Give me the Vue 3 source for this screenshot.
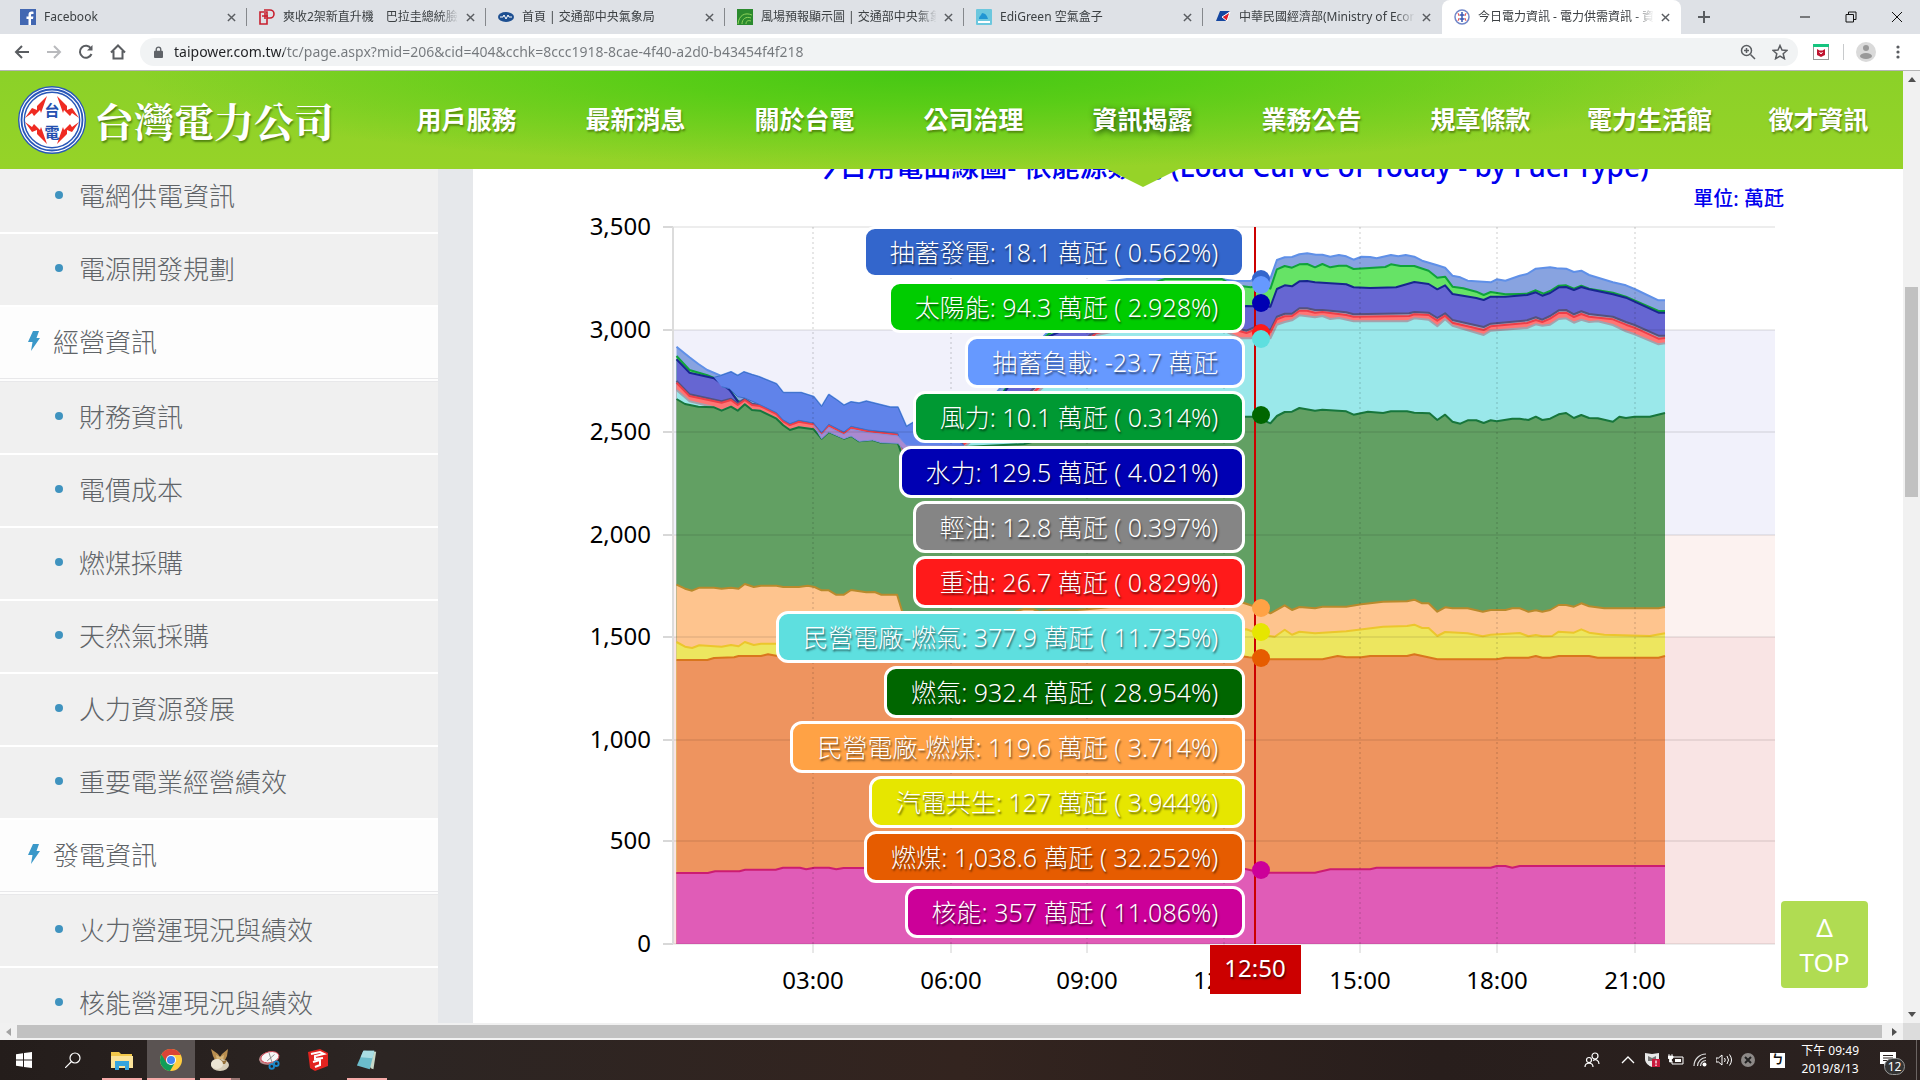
<template>
  <div class="screen">
    <!-- 瀏覽器分頁 -->
    <div class="tab-strip">
      <div v-for="tab in tabs" :key="tab.title" class="tab" :class="{ active: tab.active }">
        <svg class="favicon" viewBox="0 0 16 16" aria-hidden="true">
          <template v-if="tab.icon === 'facebook'">
            <rect width="16" height="16" fill="#4267b2" />
            <path d="M11 16V10h2l.4-2.4H11V6.2c0-.8.3-1.2 1.300-1.200h1.200V2.800C13 2.700 12.300 2.600 11.600 2.600 9.700 2.600 8.500 3.700 8.500 5.800v1.800H6.500V10h2v6z" fill="#fff" />
          </template>
          <template v-else-if="tab.icon === 'news'">
            <path d="M1 3h7v12H1z M5 1h6a4 4 0 0 1 0 8H8 M3 7h6 M6 4v6" fill="none" stroke="#c8202f" stroke-width="1.6" />
          </template>
          <template v-else-if="tab.icon === 'cwb'">
            <ellipse cx="8" cy="8" rx="8" ry="5" fill="#1d4f91" />
            <path d="M2 8h3l1-2 2 4 2-4 1 2h3" fill="none" stroke="#fff" />
          </template>
          <template v-else-if="tab.icon === 'wind'">
            <rect width="16" height="16" fill="#2b8a2e" />
            <path d="M1 15C2 6 8 3 15 6M5 15c0-5 4-8 9-6M9 15c0-3 2-4 5-3" fill="none" stroke="#8ed35a" />
          </template>
          <template v-else-if="tab.icon === 'air'">
            <rect width="16" height="16" rx="1" fill="#6cc7de" />
            <path d="M3 10c0-3 2-3 3-6 3 0 5 2 6 6z" fill="#2196d3" />
            <path d="M2 13h12" stroke="#fff" stroke-width="2" />
          </template>
          <template v-else-if="tab.icon === 'moea'">
            <path d="M5 2h10L9 7l3 5H1z" fill="#1546a0" />
            <path d="M7 8l8-5-3 9z" fill="#e0202c" stroke="#fff" />
          </template>
          <template v-else>
            <circle cx="8" cy="8" r="7" fill="#fff" stroke="#7186c8" stroke-width="1.5" />
            <path d="M8 3v10M5.500 6h5M5.500 10h5" stroke="#3a58b4" stroke-width="1.5" />
            <path d="M4 4l1 3M12 4l-1 3M4 12l1-3M12 12l-1-3" stroke="#e55" />
          </template>
        </svg>
        <span class="tab-title">{{ tab.title }}</span>
        <button class="icon-btn tab-close" aria-label="關閉分頁">
          <svg viewBox="0 0 10 10"><path d="M1 1l8 8M9 1l-8 8" /></svg>
        </button>
      </div>
      <button class="icon-btn new-tab" aria-label="新增分頁">
        <svg viewBox="0 0 12 12"><path d="M6 0v12M0 6h12" /></svg>
      </button>
      <div class="win-controls">
        <button class="icon-btn" aria-label="最小化"><svg viewBox="0 0 12 12"><path d="M1 6h10" /></svg></button>
        <button class="icon-btn" aria-label="還原"><svg viewBox="0 0 12 12"><path d="M1 3.500h7.500V11H1zM3.500 3V1H11v7.500H9" /></svg></button>
        <button class="icon-btn" aria-label="關閉"><svg viewBox="0 0 12 12"><path d="M1 1l10 10M11 1L1 11" /></svg></button>
      </div>
    </div>

    <!-- 網址列 -->
    <div class="toolbar">
      <button class="icon-btn" aria-label="上一頁">
        <svg viewBox="0 0 16 16"><path d="M15 8H2M8 2L2 8l6 6" /></svg>
      </button>
      <button class="icon-btn dim" aria-label="下一頁">
        <svg viewBox="0 0 16 16"><path d="M1 8h13M8 2l6 6-6 6" /></svg>
      </button>
      <button class="icon-btn" aria-label="重新載入">
        <svg viewBox="0 0 16 16"><path d="M13.500 10A6 6 0 1 1 13 4.500" /><path d="M14.500 1v5.500H9z" class="solid" /></svg>
      </button>
      <button class="icon-btn" aria-label="首頁">
        <svg viewBox="0 0 16 16"><path d="M1 8.500L8 1.500l7 7M3.500 7v7.500h9V7" /></svg>
      </button>
      <div class="omnibox">
        <svg class="lock" viewBox="0 0 10 14"><rect y="5" width="10" height="8" rx="1" fill="#5f6368" /><path d="M2.500 6V3.500a2.500 2.500 0 0 1 5 0V6" fill="none" stroke="#5f6368" stroke-width="1.5" /></svg>
        <input class="url" type="text" aria-label="網址" :value="url" />
        <button class="icon-btn thin" aria-label="縮放">
          <svg viewBox="0 0 16 16"><circle cx="6.5" cy="6.5" r="5" /><path d="M10.500 10.500L15 15M4 6.500h5M6.500 4v5" /></svg>
        </button>
        <button class="icon-btn thin" aria-label="加入書籤">
          <svg viewBox="0 0 16 16"><path d="M8 1.500l2 4.500 5 .5-3.800 3.300 1.200 4.900L8 12.100l-4.400 2.600 1.200-4.900L1 6.500 6 6z" /></svg>
        </button>
      </div>
      <button class="icon-btn ext" aria-label="擴充功能">
        <svg viewBox="0 0 16 16"><rect x=".5" y=".5" width="15" height="15" fill="#fff" stroke="#999" /><path d="M0 0h16v3H0z" fill="#16c47f" stroke="none" /><path d="M4 5l2.500 1.500h3L12 5v6l-4 2-4-2z" fill="#c01530" stroke="none" /><path d="M6.500 8L8 10l1.500-2" stroke="#fff" stroke-width="1" /></svg>
      </button>
      <span class="bar-sep"></span>
      <button class="icon-btn avatar" aria-label="使用者">
        <svg viewBox="0 0 20 20"><circle cx="10" cy="10" r="10" fill="#dadada" /><circle cx="10" cy="6" r="3" fill="#999" /><ellipse cx="10" cy="14" rx="6" ry="3" fill="#999" /></svg>
      </button>
      <button class="icon-btn dots" aria-label="選單">
        <svg viewBox="0 0 4 16"><circle cx="2" cy="3" r="1.6" /><circle cx="2" cy="8" r="1.6" /><circle cx="2" cy="13" r="1.6" /></svg>
      </button>
    </div>

    <div class="viewport">
      <div class="page">
        <header class="site-header">
          <a class="brand" href="#">
            <svg class="logo" viewBox="0 0 70 70" aria-hidden="true">
              <circle cx="35" cy="35" r="34" fill="#2857b8" />
              <circle cx="35" cy="35" r="32" fill="none" stroke="#fff" stroke-width="1.2" />
              <circle cx="35" cy="35" r="29" fill="none" stroke="#fff" stroke-width="1.2" />
              <circle cx="35" cy="35" r="27" fill="#fff" />
              <g fill="#ef2b22">
                <path d="M30 11L20 21l0 4-5-2-7 10 7-5 2 3 6-6 1 3z" />
                <path d="M40 11l10 10 0 4 5-2 7 10-7-5-2 3-6-6-1 3z" />
                <path d="M30 59L20 49l0-4-5 2-7-10 7 5 2-3 6 6 1-3z" />
                <path d="M40 59l10-10 0-4 5 2 7-10-7 5-2-3-6 6-1-3z" />
              </g>
              <text x="35" y="31" text-anchor="middle">台</text>
              <text x="35" y="53" text-anchor="middle">電</text>
            </svg>
            <span class="brand-name">台灣電力公司</span>
          </a>
          <nav class="main-nav">
            <a v-for="item in menu" :key="item" href="#" :class="{ current: item === '資訊揭露' }">{{ item }}</a>
          </nav>
        </header>

        <div class="page-body">
          <aside class="sidebar">
            <a
              v-for="item in sideMenu"
              :key="item.text"
              href="#"
              class="side-item"
              :class="{ heading: item.heading }"
            >
              <svg v-if="item.heading" class="bolt" viewBox="0 0 12 20"><path d="M5 0h6L8.500 7H12L3 20l1.500-9H0z" fill="#3a98c9" /></svg>
              <i v-else class="bullet"></i>
              <span>{{ item.text }}</span>
            </a>
          </aside>

          <main class="content">
            <svg class="chart" viewBox="473 169 1430 854" role="img" aria-label="今日用電曲線圖">
              <text class="chart-title" x="1230" y="177" text-anchor="middle">今日用電曲線圖- 依能源類別 (Load Curve of Today - by Fuel Type)</text>
              <text class="unit" x="1784" y="206" text-anchor="end">單位: 萬瓩</text>

              <rect x="674" y="330" width="1101" height="205" fill="#f1f1fb" />
              <rect x="674" y="535" width="1101" height="102" fill="#fcf2f0" />
              <rect x="674" y="637" width="1101" height="307" fill="#f9e4e4" />

              <!-- 由上往下疊 -->
              <template v-for="s in series" :key="s.name">
                <polygon :points="s.area" :fill="s.fill" />
                <polyline :points="s.line" fill="none" :stroke="s.stroke" stroke-width="2" stroke-linejoin="round" />
              </template>
              <polygon :points="pumpOverlay" fill="#6083ea" />
              <polyline :points="pumpOverlay" fill="none" stroke="#3c70c8" stroke-width="1" />
              <polygon :points="mixedOverlay" fill="#a98ad0" stroke="#7f8fe0" stroke-width="1" />

              <g v-for="t in yTicks" :key="t.label">
                <line x1="663" x2="673" :y1="t.y" :y2="t.y" stroke="#d8d8d8" stroke-width="2" />
                <line x1="673" x2="1775" :y1="t.y" :y2="t.y" stroke="#000" stroke-opacity=".07" stroke-width="2" />
                <text class="axis" x="651" :y="t.y + 8" text-anchor="end">{{ t.label }}</text>
              </g>
              <g v-for="t in xTicks" :key="t.label">
                <line :x1="t.x" :x2="t.x" y1="227" y2="944" stroke="#000" stroke-opacity=".2" stroke-dasharray="2 3" />
                <line :x1="t.x" :x2="t.x" y1="944" y2="953" stroke="#d0d0d0" />
                <text class="axis" :x="t.x" y="989" text-anchor="middle">{{ t.label }}</text>
              </g>
              <line x1="673" x2="673" y1="227" y2="944" stroke="#dcdcdc" stroke-width="2" />

              <line x1="1255" x2="1255" y1="227" y2="944" stroke="#cc0000" stroke-width="2" />
              <circle v-for="d in dots" :key="d.y" cx="1261" :cy="d.y" r="9" :fill="d.color" />

              <rect x="1210" y="945" width="91" height="49" fill="#cc0000" />
              <text class="cursor-time" x="1255" y="977" text-anchor="middle">12:50</text>
            </svg>

            <div class="balloons">
              <div v-for="b in balloons" :key="b.text" class="balloon" :style="{ backgroundColor: b.color }">{{ b.text }}</div>
            </div>

            <button class="to-top"><span>Δ</span><span>TOP</span></button>
          </main>
        </div>
      </div>

      <div class="v-scroll">
        <svg class="arrow" viewBox="0 0 8 5"><path d="M0 5l4-5 4 5z" fill="#505050" /></svg>
        <div class="v-track"><div class="v-thumb"></div></div>
        <svg class="arrow" viewBox="0 0 8 5"><path d="M0 0l4 5 4-5z" fill="#505050" /></svg>
      </div>
    </div>

    <div class="h-scroll">
      <svg class="arrow-side" viewBox="0 0 5 8"><path d="M5 0L0 4l5 4z" fill="#a3a3a3" /></svg>
      <div class="h-thumb"></div>
      <svg class="arrow-side" viewBox="0 0 5 8"><path d="M0 0l5 4-5 4z" fill="#505050" /></svg>
      <div class="corner"></div>
    </div>

    <!-- 工作列 -->
    <footer class="taskbar">
      <button class="task" aria-label="開始">
        <svg viewBox="0 0 16 16"><path d="M0 2.200L7 1.200V7.500H0zM8 1l8-1v7.500H8zM0 8.500h7v6.300L0 13.800zM8 8.500h8V16l-8-1z" fill="#fff" /></svg>
      </button>
      <button class="task" aria-label="搜尋">
        <svg viewBox="0 0 16 16"><circle cx="10" cy="6" r="5" fill="none" stroke="#fff" stroke-width="1.2" /><path d="M6.500 9.500L0 16" stroke="#fff" stroke-width="1.2" /></svg>
      </button>
      <button class="task big open" aria-label="檔案總管">
        <svg viewBox="0 0 22 22"><path d="M0 3h8l2 2h11v14H0z" fill="#f2c84b" /><path d="M0 7h22v12H0z" fill="#fce49a" /><path d="M4 12h14v9h-4v-4H8v4H4z" fill="#35a4dd" /></svg>
      </button>
      <button class="task big open focused" aria-label="Chrome">
        <svg viewBox="0 0 22 22"><circle cx="11" cy="11" r="11" fill="#ffcd40" /><path d="M11 6h9.800A11 11 0 0 0 1.500 5.500L6 14z" fill="#db4437" /><path d="M1.500 5.500A11 11 0 0 0 10 22l5-8.500L6.500 13.500z" fill="#0f9d58" /><circle cx="11" cy="11" r="5" fill="#fff" /><circle cx="11" cy="11" r="4" fill="#4285f4" /></svg>
      </button>
      <button class="task big open grouped" aria-label="蛋殼程式">
        <svg viewBox="0 0 22 22"><path d="M2 0l7 5 2 3 2-3 6-5-1 7-3 6H7L4 7z" fill="#b98e50" /><path d="M7 6l4 2 4-2-1 6H8z" fill="#d7b67a" /><ellipse cx="11" cy="16" rx="9" ry="6" fill="#d6cdb8" /><path d="M6 10l3 2 2-2 3 2 4-1-2 4H6z" fill="#96713a" /><ellipse cx="8" cy="15" rx="6" ry="5" fill="#ece5d3" /></svg>
      </button>
      <button class="task big" aria-label="剪取工具">
        <svg viewBox="0 0 24 22"><ellipse cx="12" cy="9" rx="11" ry="7" fill="#b9888a" transform="rotate(-12 12 9)" /><ellipse cx="13" cy="8" rx="10" ry="6" fill="#f7f7f7" stroke="#cf4352" transform="rotate(-12 13 8)" /><path d="M12 3l4 13M18 5l-8 7" stroke="#888" /><circle cx="15" cy="18" r="2.5" fill="none" stroke="#1b87c9" stroke-width="2" /><circle cx="20" cy="15" r="2.5" fill="none" stroke="#1b87c9" stroke-width="2" /></svg>
      </button>
      <button class="task big" aria-label="SketchUp">
        <svg viewBox="0 0 22 22"><path d="M1 3l12-3 8 4v13L8 22l-5-3z" fill="#e2231f" /><path d="M4 5l9-2 4 2-9 2 0 3 8-1M6 13l7-2v5l-5 2" fill="none" stroke="#fff" stroke-width="2" /></svg>
      </button>
      <button class="task big open" aria-label="記事本">
        <svg viewBox="0 0 24 22"><path d="M9 1l13 1-3 19-3-1z" fill="#c7d8c8" /><path d="M8 1h12l-5 20L1 17z" fill="#6bbccb" /><path d="M8 1h12l-2 8L5 8z" fill="#a9dde3" /></svg>
      </button>

      <div class="tray">
        <svg class="t16" viewBox="0 0 16 16"><g fill="none" stroke="#fff" stroke-width="1.2"><circle cx="11" cy="4" r="3" /><circle cx="5" cy="8" r="2.5" /><path d="M1 15c0-5 8-5 8 0M9 8.500c3-2 6 0 6 3.500" /></g></svg>
        <svg class="t16" viewBox="0 0 16 16"><path d="M2 11l6-6 6 6" fill="none" stroke="#fff" stroke-width="1.3" /></svg>
        <svg class="t16" viewBox="0 0 16 16"><path d="M1 1l7 1 7-1v6c0 4-4 7-7 8-3-1-7-4-7-8z" fill="#e8e8e8" /><path d="M4 4l4 2 4-2v5H4z" fill="#777" /><rect x="8" y="7" width="8" height="8" fill="#c8193c" /><path d="M12 8.500v3M12 12.500v1.500" stroke="#fff" stroke-width="1.3" /></svg>
        <svg class="t16" viewBox="0 0 16 16"><path d="M5 5h10v7H4V9" fill="none" stroke="#fff" /><path d="M7 7h6v3H7z" fill="#fff" /><path d="M1 2v2M4 2v2M0 4h5v2L3.500 7.500V10h-2V7.500L0 6z" fill="#fff" stroke="#fff" stroke-width=".8" /></svg>
        <svg class="t16" viewBox="0 0 16 16"><g fill="none" stroke="#ddd" stroke-width="1.2"><path d="M2 14A12 12 0 0 1 14 2" /><path d="M5.500 14A9 9 0 0 1 14 5.500" /><path d="M8.500 14A6 6 0 0 1 14 8.500" /></g><circle cx="12.5" cy="12.5" r="2" fill="#fff" /></svg>
        <svg class="t16" viewBox="0 0 16 16"><g fill="none" stroke="#fff"><path d="M0 6h2.500L6 3v10L2.500 10H0zM8.500 6q1.500 2 0 4M11 4q3 4 0 8M13.500 2.500q4 5.500 0 11" /></g></svg>
        <svg class="t16" viewBox="0 0 16 16"><circle cx="8" cy="8" r="7" fill="#8d8987" /><path d="M5 5l6 6M11 5l-6 6" stroke="#222" stroke-width="2" /></svg>
        <span class="ime">ㄅ</span>
        <div class="clock"><span>下午 09:49</span><span>2019/8/13</span></div>
        <div class="notify">
          <svg viewBox="0 0 16 16"><path d="M0 0h16v12H7l-3 3v-3H0z" fill="#fff" /><path d="M3 3.500h10M3 6h10M3 8.500h7" stroke="#2a211f" /></svg>
          <span class="badge">12</span>
        </div>
      </div>
    </footer>
  </div>
</template>

<script setup>
const url = 'taipower.com.tw/tc/page.aspx?mid=206&cid=404&cchk=8ccc1918-8cae-4f40-a2d0-b43454f4f218'

const tabs = [
  { title: 'Facebook', icon: 'facebook' },
  { title: '爽收2架新直升機　巴拉圭總統臉書', icon: 'news' },
  { title: '首頁 | 交通部中央氣象局', icon: 'cwb' },
  { title: '風場預報顯示圖 | 交通部中央氣象局', icon: 'wind' },
  { title: 'EdiGreen 空氣盒子', icon: 'air' },
  { title: '中華民國經濟部(Ministry of Economic', icon: 'moea' },
  { title: '今日電力資訊 - 電力供需資訊 - 資訊', icon: 'taipower', active: true }
]

const menu = ['用戶服務', '最新消息', '關於台電', '公司治理', '資訊揭露', '業務公告', '規章條款', '電力生活館', '徵才資訊']

const sideMenu = [
  { text: '電網供電資訊' },
  { text: '電源開發規劃' },
  { text: '經營資訊', heading: true },
  { text: '財務資訊' },
  { text: '電價成本' },
  { text: '燃煤採購' },
  { text: '天然氣採購' },
  { text: '人力資源發展' },
  { text: '重要電業經營績效' },
  { text: '發電資訊', heading: true },
  { text: '火力營運現況與績效' },
  { text: '核能營運現況與績效' }
]

const balloons = [
  { text: '抽蓄發電: 18.1 萬瓩 ( 0.562%)', color: '#3366cc' },
  { text: '太陽能: 94.3 萬瓩 ( 2.928%)', color: '#00cc00' },
  { text: '抽蓄負載: -23.7 萬瓩', color: '#6699ff' },
  { text: '風力: 10.1 萬瓩 ( 0.314%)', color: '#009933' },
  { text: '水力: 129.5 萬瓩 ( 4.021%)', color: '#0000b3' },
  { text: '輕油: 12.8 萬瓩 ( 0.397%)', color: '#858585' },
  { text: '重油: 26.7 萬瓩 ( 0.829%)', color: '#ff1a1a' },
  { text: '民營電廠-燃氣: 377.9 萬瓩 ( 11.735%)', color: '#5edfdf' },
  { text: '燃氣: 932.4 萬瓩 ( 28.954%)', color: '#006600' },
  { text: '民營電廠-燃煤: 119.6 萬瓩 ( 3.714%)', color: '#ffa245' },
  { text: '汽電共生: 127 萬瓩 ( 3.944%)', color: '#e6e600' },
  { text: '燃煤: 1,038.6 萬瓩 ( 32.252%)', color: '#e65c00' },
  { text: '核能: 357 萬瓩 ( 11.086%)', color: '#cc0099' }
]

const yTicks = [
  { label: '3,500', y: 227 },
  { label: '3,000', y: 330 },
  { label: '2,500', y: 432 },
  { label: '2,000', y: 535 },
  { label: '1,500', y: 637 },
  { label: '1,000', y: 740 },
  { label: '500', y: 841 },
  { label: '0', y: 944 }
]

const xTicks = [
  { label: '03:00', x: 813 },
  { label: '06:00', x: 951 },
  { label: '09:00', x: 1087 },
  { label: '12:00', x: 1224 },
  { label: '15:00', x: 1360 },
  { label: '18:00', x: 1497 },
  { label: '21:00', x: 1635 }
]

const dots = [
  { y: 279, color: '#3366cc' },
  { y: 285, color: '#6699ff' },
  { y: 303, color: '#0000b3' },
  { y: 333, color: '#ff1a1a' },
  { y: 339, color: '#5edfdf' },
  { y: 415, color: '#006600' },
  { y: 608, color: '#ffa245' },
  { y: 632, color: '#e6e600' },
  { y: 658, color: '#e65c00' },
  { y: 870, color: '#cc0099' }
]

// 每段資料各有自己的原點與比例
const scale = (str, ox, sx, oy) =>
  str.trim().split(/\s+/).map(p => {
    const [x, y] = p.split(',').map(Number)
    return [Math.round((ox + x / sx) * 10) / 10, Math.round((oy + y / 3) * 10) / 10]
  })
const morning = str => scale(str, 560, 2.24, 160)
const base = str => scale(str, 560, 2.24, 440)
const low = str => scale(str, 560, 2.063, 720)
const after = str => scale(str, 1240, 2.306, 200)
const afterLow = str => scale(str, 1240, 2.306, 520)
const join = pts => pts.map(p => p.join(',')).join(' ')

const make = (name, fill, stroke, pts) => ({
  name,
  fill,
  stroke,
  line: join(pts),
  area: join([...pts, [pts[pts.length - 1][0], 944], [pts[0][0], 944]])
})

const topMorning = '261,560 290,592 310,612 330,630 360,647 383,636 398,647 412,636 430,644 445,650 485,672 500,698 540,698 568,710 586,740 602,704 620,720 636,736 652,726 670,730 686,724 740,742 757,742 776,800 793,786'
const redMorning = '261,668 290,708 362,728 383,720 398,735 414,720 430,735 448,738 485,762 500,784 515,795 535,785 568,793 586,822 602,797 636,820 652,803 690,814 757,824 765,870'
const gasMorning = '261,717 280,732 310,740 345,742 362,752 383,740 398,752 414,733 430,750 448,752 485,776 500,796 515,810 535,802 568,808 586,836 602,816 636,836 652,828 670,844 700,840 720,848 757,850 765,880'

const series = [
  make('抽蓄', '#88a3e0', '#5f90e8', [
    ...morning(topMorning),
    [940, 425], [970, 420], [997, 392], [1045, 335], [1080, 300], [1105, 282], [1127, 279], [1220, 279], [1235, 281],
    ...after('25,243 45,222 70,235 85,180 103,172 120,171 137,163 155,160 175,164 190,164 208,170 228,165 245,169 262,179 280,170 300,171 315,175 348,165 365,169 382,165 402,170 420,182 455,196 473,203 490,227 508,232 525,242 578,247 592,238 612,242 645,227 662,222 682,206 715,202 730,205 752,206 770,216 787,212 805,225 860,247 890,256 910,267 965,301 980,301')
  ]),
  make('太陽能', '#66e366', '#0fa33a', [
    ...morning('261,588 290,630 330,646 345,654 380,690 398,722 430,742 485,770 568,800 757,830 776,860'),
    [960, 440], [997, 400], [1045, 337], [1110, 286], [1150, 284], [1165, 279], [1222, 279], [1232, 285],
    ...after('25,262 50,255 70,266 85,208 103,198 120,203 137,193 155,192 173,202 190,192 208,202 228,197 245,197 262,207 335,201 348,193 370,198 402,198 435,212 455,233 473,230 490,260 515,265 545,275 562,285 578,276 612,283 645,282 662,281 682,271 700,281 715,273 735,257 752,256 770,266 787,257 805,266 860,278 890,290 965,333 980,333')
  ]),
  make('水力', '#6666d2', '#17268f', [
    ...morning('261,598 290,638 330,650 345,655 380,690 398,724 430,742 485,770 568,800 757,830 776,860'),
    [960, 440], [997, 402], [1045, 338], [1110, 310], [1230, 308],
    ...after('15,318 70,320 85,267 103,256 120,259 137,244 155,243 173,247 208,250 245,253 262,262 300,264 360,262 402,246 435,252 455,268 473,256 490,282 545,294 562,300 578,290 612,290 662,285 682,277 697,287 715,279 735,262 752,261 770,270 787,261 805,268 860,283 890,293 965,338 980,338')
  ]),
  make('輕油', '#a9a3b8', '#55527e', [
    ...morning('261,663 290,703 362,724 383,716 398,730 414,716 430,731 448,734 485,758 500,780 515,791 535,781 568,789 586,818 602,793 636,816 652,799 690,810 757,820 765,866'),
    [960, 446], [1030, 392], [1090, 335], [1130, 322], [1225, 325],
    ...after('15,392 40,378 70,390 85,350 103,341 120,341 137,325 155,325 173,330 190,330 245,337 262,343 390,340 402,336 435,338 455,354 473,340 490,360 562,381 578,371 662,361 682,352 697,359 715,348 735,331 752,330 770,343 787,334 805,342 860,350 890,366 910,375 965,407 980,407')
  ]),
  make('重油', '#ff7575', '#ee3e48', [
    ...morning(redMorning),
    [960, 447], [1034, 392], [1094, 335], [1130, 324], [1225, 327],
    ...after('15,399 40,386 70,397 85,358 103,349 120,348 137,332 155,332 173,338 190,336 245,345 262,350 390,348 402,343 435,345 455,362 473,347 490,368 562,390 578,379 662,369 682,360 697,366 715,356 735,339 752,338 770,351 787,342 805,350 860,358 890,374 910,383 965,416 980,414')
  ]),
  make('民營燃氣', '#9ae8ea', '#a2a2ad', [
    ...morning('261,690 290,724 345,742 362,752 383,740 398,752 414,733 430,750 448,752 485,776 500,796 515,810 535,802 568,808 586,836 602,816 636,836 652,828 700,836 757,845 765,875'),
    [964, 447], [1038, 392], [1097, 335], [1130, 328], [1225, 331],
    ...after('0,415 25,415 40,405 70,415 85,374 103,366 120,361 137,346 173,352 190,348 208,357 228,354 262,364 385,364 402,355 435,359 455,379 473,358 490,377 562,405 578,392 662,384 682,373 697,377 715,374 735,357 752,355 770,368 787,359 805,366 825,364 860,375 890,394 910,403 965,433 980,430')
  ]),
  make('燃氣', '#62a063', '#17763c', [
    ...morning(gasMorning),
    [964, 447], [1024, 444], [1100, 425],
    ...after('0,650 35,650 70,670 85,648 103,636 120,635 137,624 173,632 190,629 245,634 262,644 295,635 330,639 348,634 385,634 402,638 437,640 455,660 473,644 490,665 508,671 525,661 545,661 562,669 578,661 592,664 628,656 645,656 665,660 682,650 697,660 715,656 735,643 752,639 770,654 787,645 805,654 825,655 860,665 875,650 890,654 910,650 945,650 980,639')
  ]),
  make('民營燃煤', '#fec48e', '#b98a2c', [
    ...base('261,434 280,446 296,452 312,443 345,443 362,446 383,443 400,446 414,432 434,441 450,437 485,437 500,441 535,441 555,437 570,441 586,451 602,451 618,464 636,464 652,450 686,457 705,456 720,464 755,464 770,530 1000,522 1040,507 1060,508 1075,516 1100,509 1120,511 1150,511 1180,508 1230,502 1450,500'),
    ...afterLow('0,245 25,256 50,265 70,280 103,256 120,270 137,261 173,265 190,260 245,260 280,253 330,245 385,244 402,239 420,250 435,250 455,275 473,262 490,265 525,265 560,275 578,270 612,270 628,265 645,265 665,275 682,271 697,275 715,270 735,255 752,255 770,260 787,250 805,259 840,265 965,265 980,261')
  ]),
  make('汽電共生', '#ede65f', '#ecc62c', [
    ...base('261,606 280,620 296,624 312,616 362,620 383,615 400,619 414,606 434,615 450,611 490,611'),
    ...afterLow('15,328 50,345 80,350 103,329 120,344 137,335 173,340 245,334 330,320 385,318 402,314 420,324 435,324 455,348 473,336 525,340 560,349 578,344 645,339 665,349 682,345 697,349 720,348 735,335 770,338 787,328 805,338 840,344 945,348 980,340')
  ]),
  make('燃煤', '#ee945f', '#d9761d', [
    ...base('261,660 330,660 345,654 390,652 400,648 450,648 466,643 490,649'),
    ...afterLow('0,408 20,412 70,418 190,418 225,408 245,412 280,412 300,408 385,408 402,403 455,418 592,418 612,413 665,413 682,408 697,413 715,413 735,408 805,408 825,413 965,413 980,408')
  ]),
  make('核能', '#e05cb7', '#cc1c72', [
    ...low('240,459 305,459 320,454 370,454 382,449 445,449 460,443 495,443 508,448 525,443 555,443 570,448 585,444 634,444'),
    ...afterLow('0,1045 15,1048 50,1058 173,1058 208,1048 300,1048 315,1043 578,1043 592,1038 612,1038 628,1043 645,1038 980,1038')
  ])
]

// 清晨抽蓄負載蓋住的區塊
const pumpOverlay = join(morning(
  '345,652 360,647 383,636 398,647 412,636 430,644 445,650 485,672 500,698 540,698 568,710 586,740 602,704 620,720 636,736 652,726 670,730 686,724 740,742 757,742 776,800 793,786 830,790 905,856 765,858 757,820 690,810 652,799 636,816 602,793 586,818 568,789 535,781 515,791 500,780 485,758 448,734 414,714 398,710 380,686 362,680'
))
const mixedOverlay = join(morning(
  '568,796 586,825 602,802 636,824 652,808 690,818 757,828 775,856 905,858 900,866 770,868 757,850 720,848 700,840 670,844 652,828 636,836 602,816 586,836'
))
</script>

<style>
body {
  margin: 0;
  overflow: hidden;
}
</style>

<style scoped>
.screen {
  display: flex;
  flex-direction: column;
  height: 100vh;
  background: #fff;
  font-family: "Noto Sans", "Noto Sans CJK TC", sans-serif;
}

a {
  color: inherit;
  text-decoration: none;
}

button {
  padding: 0;
  border: 0;
  background: none;
  font-family: inherit;
}

.icon-btn {
  display: flex;
  align-items: center;
  justify-content: center;
  flex-shrink: 0;
}

.icon-btn svg {
  width: 16px;
  height: 16px;
  fill: none;
  stroke: #5a5d61;
  stroke-width: 2;
}

/* 分頁 */
.tab-strip {
  display: flex;
  align-items: center;
  height: 34px;
  flex-shrink: 0;
  padding-left: 8px;
  background: #dee1e6;
}

.tab {
  display: flex;
  align-items: center;
  width: 239px;
  height: 34px;
  padding: 0 8px 0 12px;
  box-sizing: border-box;
  position: relative;
}

.tab::after {
  content: "";
  position: absolute;
  right: 0;
  top: 8px;
  width: 1px;
  height: 18px;
  background: #85888c;
}

.tab.active {
  background: #fff;
  border-radius: 8px 8px 0 0;
}

.tab.active::after,
.tab:nth-child(6)::after {
  display: none;
}

.favicon {
  width: 16px;
  height: 16px;
  margin-right: 8px;
  flex-shrink: 0;
}

.tab-title {
  flex: 1;
  overflow: hidden;
  white-space: nowrap;
  font-size: 12px;
  line-height: 18px;
  color: #3c4043;
  -webkit-mask-image: linear-gradient(to right, #000 156px, transparent 176px);
  mask-image: linear-gradient(to right, #000 156px, transparent 176px);
}

.tab-close {
  width: 16px;
  height: 16px;
  margin-left: 4px;
}

.tab-close svg {
  width: 9px;
  height: 9px;
  stroke-width: 1.6;
}

.new-tab {
  width: 28px;
  margin-left: 9px;
}

.new-tab svg {
  width: 12px;
  height: 12px;
}

.win-controls {
  display: flex;
  margin-left: auto;
  height: 28px;
}

.win-controls .icon-btn {
  width: 46px;
}

.win-controls svg {
  width: 12px;
  height: 12px;
  stroke: #111;
  stroke-width: 1;
}

/* 工具列 */
.toolbar {
  display: flex;
  align-items: center;
  height: 36px;
  flex-shrink: 0;
  padding: 0 8px 0 6px;
  border-bottom: 1px solid #b5b5b5;
}

.toolbar > .icon-btn {
  width: 32px;
  height: 28px;
}

.toolbar .dim svg {
  stroke: #b9babd;
}

.toolbar .solid {
  fill: #5a5d61;
  stroke: none;
}

.omnibox {
  display: flex;
  align-items: center;
  flex: 1;
  height: 28px;
  margin-left: 6px;
  padding: 0 2px 0 14px;
  border-radius: 14px;
  background: #f1f3f4;
}

.omnibox .icon-btn {
  width: 32px;
}

.thin svg {
  stroke-width: 1.5;
}

.lock {
  width: 9px;
  height: 13px;
  margin-right: 11px;
}

.url {
  flex: 1;
  height: 24px;
  padding: 0 0 2px;
  box-sizing: border-box;
  border: 0;
  outline: 0;
  font-family: inherit;
  font-size: 14px;
  color: transparent;
  background: linear-gradient(to right, #202124 110px, #74787c 110px);
  -webkit-background-clip: text;
  background-clip: text;
}

.toolbar .ext {
  margin-left: 7px;
}

.ext svg {
  stroke-width: 1;
}

.bar-sep {
  width: 1px;
  height: 16px;
  margin: 0 6px;
  background: #c8cacc;
}

.avatar svg {
  width: 20px;
  height: 20px;
  stroke: none;
}

.toolbar .dots {
  margin-right: -2px;
}

.dots svg {
  width: 4px;
  fill: #5a5d61;
  stroke: none;
}

/* 網頁 */
.viewport {
  display: flex;
  flex: 1;
  min-height: 0;
}

.page {
  display: flex;
  flex-direction: column;
  flex: 1;
  min-width: 0;
  overflow: hidden;
}

.site-header {
  display: flex;
  align-items: center;
  height: 98px;
  flex-shrink: 0;
  position: relative;
  z-index: 2;
  background:
    radial-gradient(ellipse 42% 100% at 49% 0, #45c714 0%, rgba(80, 204, 20, 0.85) 35%, rgba(130, 210, 36, 0) 100%),
    linear-gradient(#8bd128, #96d328);
}

.brand {
  display: flex;
  align-items: center;
  width: 382px;
  padding-left: 17px;
  box-sizing: border-box;
  flex-shrink: 0;
}

.logo {
  width: 70px;
  height: 70px;
  margin-right: 7px;
}

.logo text {
  font-size: 15px;
  font-weight: 700;
  fill: #2450b0;
}

.brand-name {
  font-family: "Noto Serif CJK TC", "Noto Sans CJK TC", serif;
  font-size: 40px;
  font-weight: 700;
  line-height: 60px;
  color: #fff;
  text-shadow: 1px 2px 2px rgba(40, 80, 0, 0.6);
  white-space: nowrap;
}

.main-nav {
  display: grid;
  grid-template-columns: repeat(9, 1fr);
  flex: 1;
  height: 98px;
}

.main-nav a {
  display: flex;
  align-items: center;
  justify-content: center;
  padding-bottom: 4px;
  position: relative;
  font-size: 25px;
  font-weight: 700;
  color: #fff;
  white-space: nowrap;
  text-shadow: 1px 2px 2px rgba(60, 90, 0, 0.6);
}

.main-nav .current {
  text-shadow: 1px 2px 6px rgba(20, 60, 0, 0.9);
}

.main-nav .current::after {
  content: "";
  position: absolute;
  top: 98px;
  left: 50%;
  margin-left: -36px;
  border: 36px solid transparent;
  border-top: 18px solid #96d328;
  border-bottom: 0;
}

.page-body {
  display: flex;
  flex: 1;
  min-height: 0;
}

.sidebar {
  width: 438px;
  flex-shrink: 0;
  margin-top: -8px;
}

.side-item {
  display: flex;
  align-items: center;
  height: 67px;
  padding: 0 0 4px 55px;
  border-bottom: 2px solid #fff;
  background: #f0f0f0;
  font-size: 26px;
  font-weight: 300;
  color: #606468;
}

.side-item.heading {
  padding-left: 28px;
  border-bottom: 4px double #e8e8ea;
  background: #fdfdfd;
}

.bullet {
  width: 8px;
  height: 8px;
  margin-right: 16px;
  border-radius: 50%;
  background: #3f93bf;
}

.bolt {
  width: 12px;
  height: 20px;
  margin-right: 13px;
}

.content {
  flex: 1;
  min-width: 0;
  border-left: 35px solid #e6e8eb;
  position: relative;
  overflow: hidden;
}

.chart {
  display: block;
  width: 100%;
}

.chart-title {
  font-size: 28px;
  font-weight: 500;
  fill: #0000ee;
}

.unit {
  font-size: 20px;
  font-weight: 500;
  fill: #0000ee;
}

.axis {
  font-size: 24px;
  fill: #000;
}

.cursor-time {
  font-size: 24px;
  fill: #fff;
  text-shadow: 1px 2px 2px rgba(0, 0, 0, 0.6);
}

/* 游標提示 */
.balloons {
  position: absolute;
  top: 57px;
  right: 46%;
  display: flex;
  flex-direction: column;
  align-items: flex-end;
  gap: 3px;
}

.balloon {
  padding: 0 24px;
  border: 3px solid #fff;
  border-radius: 12px;
  font-size: 25px;
  font-weight: 300;
  line-height: 46px;
  color: #fff;
  white-space: nowrap;
  text-shadow: 1px 2px 2px rgba(0, 0, 0, 0.6);
}

.to-top {
  position: absolute;
  right: 35px;
  bottom: 35px;
  display: flex;
  flex-direction: column;
  align-items: center;
  justify-content: center;
  width: 87px;
  height: 87px;
  border-radius: 4px;
  background: #b0dc52;
  font-size: 26px;
  line-height: 35px;
  color: #fff;
}

/* 捲軸 */
.v-scroll {
  display: flex;
  flex-direction: column;
  align-items: center;
  width: 17px;
  padding: 6px 0;
  box-sizing: border-box;
  background: #f1f1f1;
}

.arrow {
  width: 8px;
  height: 5px;
}

.v-track {
  flex: 1;
  padding-top: 205px;
}

.v-thumb {
  width: 13px;
  height: 210px;
  background: #c1c1c1;
}

.h-scroll {
  display: flex;
  align-items: center;
  height: 17px;
  flex-shrink: 0;
  padding-left: 6px;
  background: #f1f1f1;
}

.arrow-side {
  width: 5px;
  height: 8px;
}

.h-thumb {
  flex: 1;
  height: 13px;
  margin: 0 10px 0 6px;
  background: #c1c1c1;
}

.corner {
  width: 17px;
  height: 17px;
  margin-left: 6px;
  background: #dcdcdc;
}

/* 工作列 */
.taskbar {
  display: flex;
  gap: 1px;
  height: 40px;
  flex-shrink: 0;
  background: linear-gradient(to right, #241d1b, #2c2523 20%, #33241f 50%, #281e1c 75%, #2b2220);
  color: #fff;
}

.task {
  display: flex;
  align-items: center;
  justify-content: center;
  width: 48px;
  position: relative;
}

.task svg {
  width: 16px;
  height: 16px;
}

.task.big svg {
  width: 22px;
  height: 22px;
}

.task.open::after {
  content: "";
  position: absolute;
  left: 4px;
  right: 4px;
  bottom: 0;
  height: 2px;
  background: #f5aaa8;
}

.task.focused {
  background: #5a5352;
}

.task.focused::after {
  left: 0;
  right: 0;
}

.task.grouped::after {
  background: linear-gradient(to right, #f5aaa8 78%, #9a7472 78%);
}

.tray {
  display: flex;
  align-items: center;
  gap: 8px;
  margin-left: auto;
  margin-right: 3px;
  padding-right: 20px;
  border-right: 1px solid #6b6462;
}

.t16 {
  width: 16px;
  height: 16px;
}

.t16:first-child {
  margin-right: 12px;
}

.ime {
  width: 15px;
  height: 15px;
  margin: 0 8px 0 6px;
  background: #fff;
  color: #111;
  font-size: 12px;
  font-weight: 700;
  line-height: 14px;
  text-align: center;
}

.clock {
  display: flex;
  flex-direction: column;
  align-items: center;
  font-size: 12px;
  line-height: 18px;
  white-space: nowrap;
}

.notify {
  width: 16px;
  height: 16px;
  margin-left: 13px;
  position: relative;
}

.notify svg {
  display: block;
  width: 16px;
  height: 16px;
}

.badge {
  position: absolute;
  left: 4px;
  top: 6px;
  width: 19px;
  height: 15px;
  border: 1px solid #999;
  border-radius: 9px;
  background: #333;
  font-size: 12px;
  line-height: 15px;
  text-align: center;
}
</style>
